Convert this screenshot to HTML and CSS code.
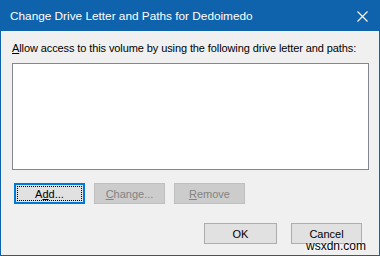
FILE: index.html
```html
<!DOCTYPE html>
<html lang="en">
<head>
    <meta charset="UTF-8">
    <title>Change Drive Letter and Paths for Dedoimedo</title>
    <link rel="stylesheet" href="styles.css">
</head>
<body>
    <div class="window">
        <div class="titlebar">
            <span class="title">Change Drive Letter and Paths for Dedoimedo</span>
            <svg class="close" width="11" height="11" viewBox="0 0 11 11">
                <path d="M0.5 0.5 L10.5 10.5 M10.5 0.5 L0.5 10.5" stroke="#fff" stroke-width="1.1" fill="none"/>
            </svg>
        </div>
        <div class="content">
            <p class="label"><u>A</u>llow access to this volume by using the following drive letter and paths:</p>
            <div class="listbox"></div>
            <div class="row">
                <button class="btn focus"><span class="focus-ring">A<u>d</u>d...</span></button>
                <button class="btn" disabled><u>C</u>hange...</button>
                <button class="btn" disabled><u>R</u>emove</button>
            </div>
            <div class="row right">
                <button class="btn wide">OK</button>
                <button class="btn">Cancel</button>
            </div>
        </div>
        <span class="watermark">wsxdn.com</span>
    </div>
</body>
</html>
```

FILE: styles.css
```css
body {
    margin: 0;
    padding: 0;
    font-family: "Liberation Sans", Arial, sans-serif;
    font-size: 11px;
}
.window {
    position: relative;
    width: 380px;
    height: 256px;
    box-sizing: border-box;
    border: 1px solid #0f63ad;
    border-top: none;
    background: #f0f0f0;
}
.titlebar {
    height: 31px;
    background: #0f63ad;
    color: #fff;
    display: flex;
    align-items: center;
    justify-content: space-between;
    padding: 0 11px 0 9px;
    font-size: 11.8px;
}
.close {
    margin-top: 1px;
}
.content {
    padding: 9px 10px 0 11px;
}
.label {
    margin: 0;
    height: 16px;
    line-height: 16px;
    white-space: nowrap;
    letter-spacing: -0.1px;
    color: #000;
}
u {
    text-decoration-thickness: 1px;
    text-underline-offset: 1px;
}
.listbox {
    margin-top: 7px;
    height: 105px;
    border: 1px solid #828790;
    background: #fff;
}
.row {
    display: flex;
    gap: 9px;
    margin-top: 13px;
    padding-left: 2px;
}
.row.right {
    justify-content: flex-end;
    gap: 14px;
    margin-top: 19px;
    padding-right: 7px;
}
.btn {
    width: 71px;
    height: 21px;
    padding: 0;
    font-family: inherit;
    font-size: 11px;
    color: #000;
    background: #e1e1e1;
    border: 1px solid #adadad;
    border-radius: 0;
}
.btn.wide {
    width: 73px;
}
.btn:disabled {
    background: #cccccc;
    border-color: #bfbfbf;
    color: #838383;
}
.btn.focus {
    border: 2px solid #0078d7;
    padding: 1px;
    display: flex;
}
.focus-ring {
    flex: 1;
    border: 1px dotted #000;
    display: flex;
    align-items: center;
    justify-content: center;
}
.watermark {
    position: absolute;
    right: 13px;
    bottom: 2px;
    font-family: "Liberation Sans", Arial, sans-serif;
    font-size: 12px;
    color: #000;
    text-shadow: 0 0 2px #fff, 0 0 2px #fff;
}
```
